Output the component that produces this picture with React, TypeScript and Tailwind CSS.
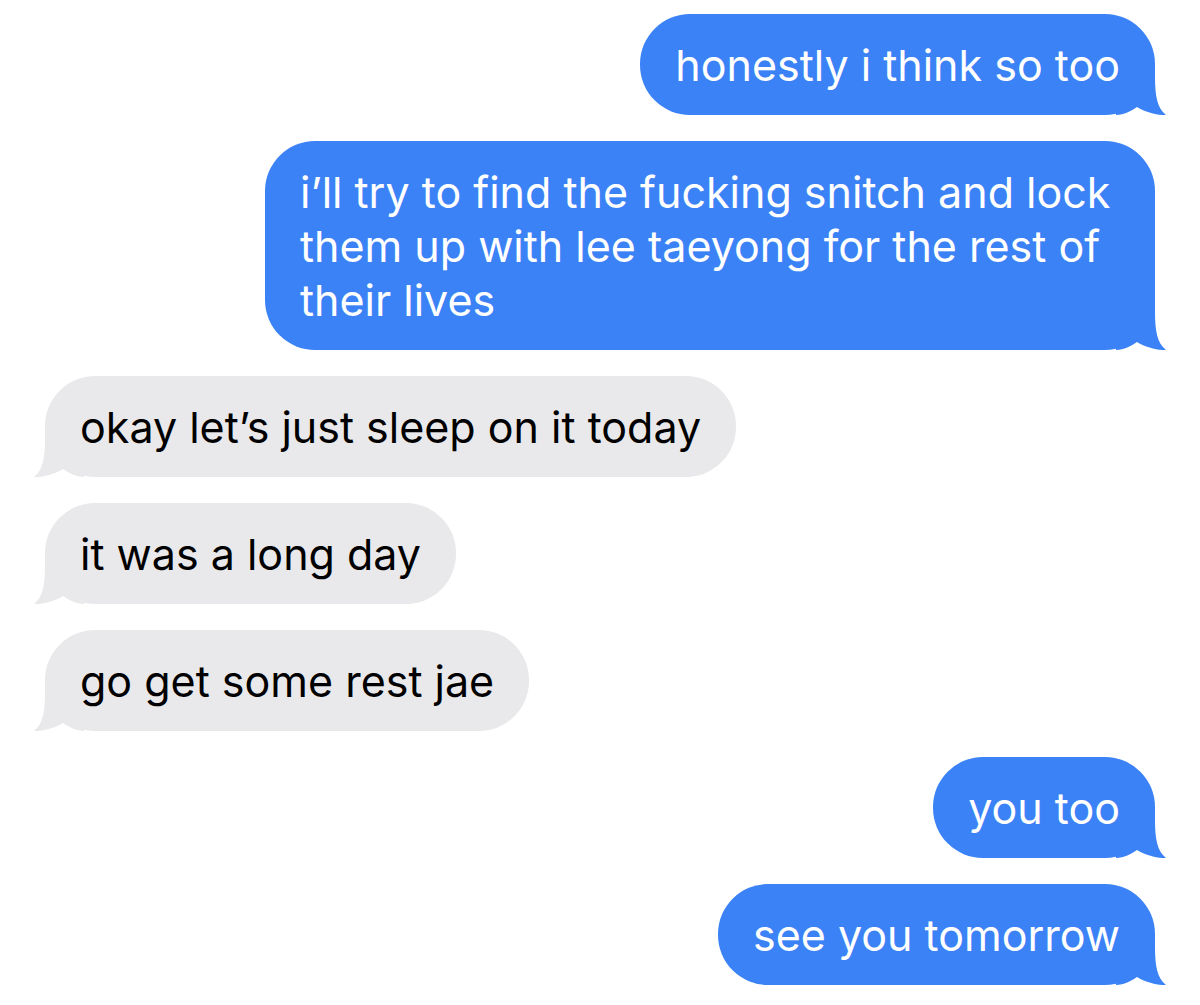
import React from "react";

type Msg = { from: "me" | "them"; text: string };

const messages: Msg[] = [
  { from: "me", text: "honestly i think so too" },
  {
    from: "me",
    text: "i\u2019ll try to find the fucking snitch and lock them up with lee taeyong for the rest of their lives",
  },
  { from: "them", text: "okay let\u2019s just sleep on it today" },
  { from: "them", text: "it was a long day" },
  { from: "them", text: "go get some rest jae" },
  { from: "me", text: "you too" },
  { from: "me", text: "see you tomorrow" },
];

// bubble tail, drawn for the right side; flipped for the left
function Tail({ color, left }: { color: string; left?: boolean }) {
  return (
    <svg
      width="50"
      height="50"
      viewBox="0 0 50 50"
      className={
        left
          ? "absolute bottom-0 left-[-11px] -scale-x-100"
          : "absolute bottom-0 right-[-11px]"
      }
    >
      <path
        d="M0,0 H39 V12 C39,30 41,43 50,50 C42,50.5 30,47.5 21,42 C15,46 8,50 0,50 Z"
        fill={color}
      />
    </svg>
  );
}

function Bubble({ msg }: { msg: Msg }) {
  const mine = msg.from === "me";
  return (
    <div className={mine ? "flex justify-end" : "flex justify-start"}>
      <div
        className={
          mine
            ? "relative max-w-[890px] rounded-[50px] bg-[#3b82f6] px-[35px] py-[23.5px] text-white"
            : "relative max-w-[890px] rounded-[50px] bg-[#e9e9eb] px-[35px] py-[23.5px] text-black"
        }
      >
        <Tail color={mine ? "#3b82f6" : "#e9e9eb"} left={!mine} />
        <p className="relative text-[43px] leading-[54px]">{msg.text}</p>
      </div>
    </div>
  );
}

export default function App() {
  return (
    <div
      className="min-h-[1005px] w-[1200px] bg-white px-[45px] pt-[14px]"
      style={{ fontFamily: "Inter, 'Noto Sans', sans-serif" }}
    >
      <div className="flex flex-col gap-[26px]">
        {messages.map((m, i) => (
          <Bubble key={i} msg={m} />
        ))}
      </div>
    </div>
  );
}
